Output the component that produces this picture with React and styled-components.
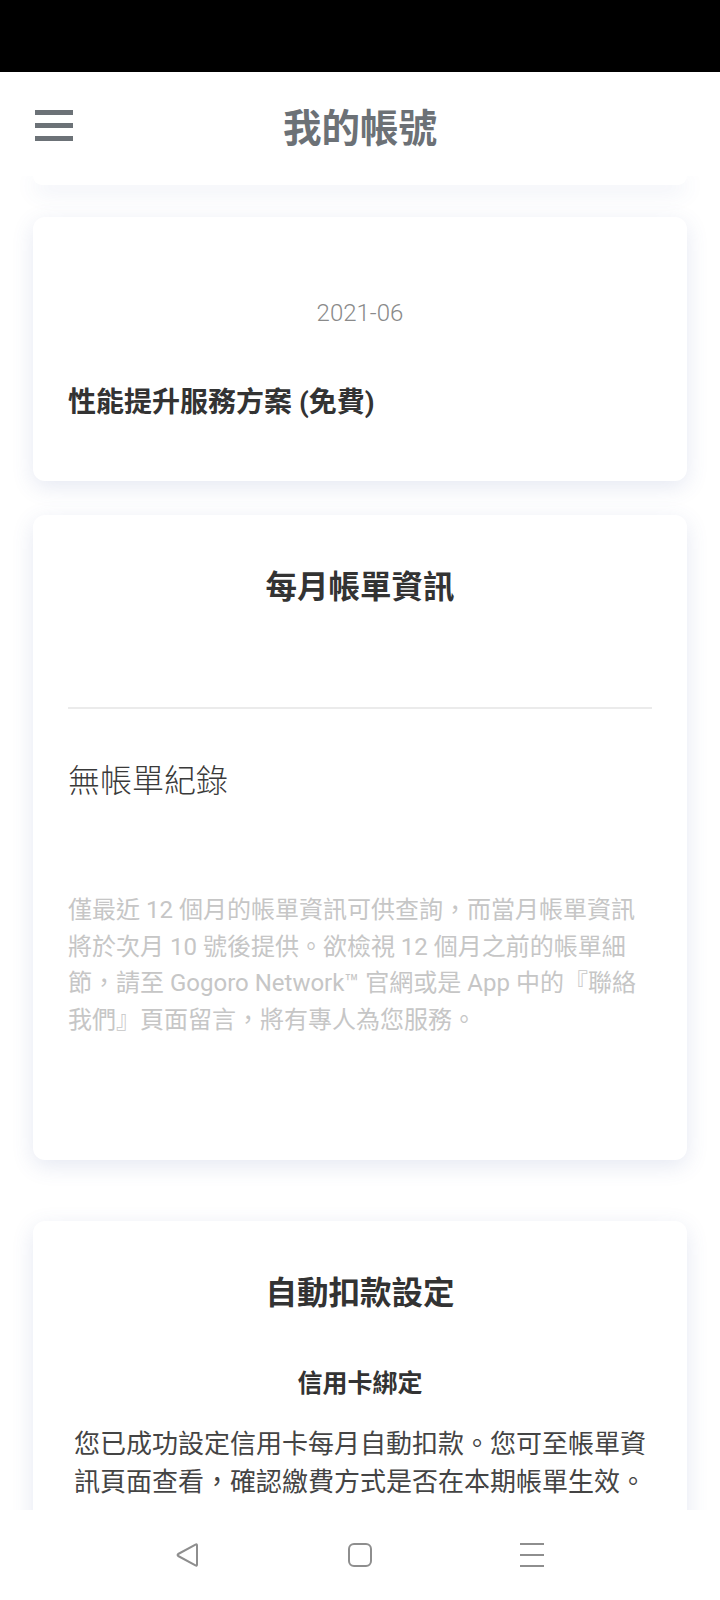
import React from "react";
import styled, { createGlobalStyle } from "styled-components";

const GlobalStyle = createGlobalStyle`
  body {
    margin: 0;
    background: #ffffff;
    font-family: Roboto, "Noto Sans CJK TC", sans-serif;
  }
`;

function App() {
  return (
    <>
      <GlobalStyle />
      <Screen>
        <StatusBar />
        <Header>
          <MenuButton aria-label="menu">
            <span />
            <span />
            <span />
          </MenuButton>
          <PageTitle>我的帳號</PageTitle>
          <div />
        </Header>

        <Scroll>
          <PeekCard />

          <Card $top={32} $height={264} $pt={82}>
            <DateText>2021-06</DateText>
            <PlanName>性能提升服務方案 (免費)</PlanName>
          </Card>

          <Card $top={34} $height={645} $pt={50}>
            <CardTitle>每月帳單資訊</CardTitle>
            <Divider />
            <EmptyText>無帳單紀錄</EmptyText>
            <Notice>
              僅最近 12 個月的帳單資訊可供查詢，而當月帳單資訊將於次月 10
              號後提供。欲檢視 12 個月之前的帳單細節，請至 Gogoro Network™
              官網或是 App 中的『聯絡我們』頁面留言，將有專人為您服務。
            </Notice>
          </Card>

          <Card $top={61} $pt={50} $pb={80}>
            <CardTitle>自動扣款設定</CardTitle>
            <SubTitle>信用卡綁定</SubTitle>
            <BodyText>
              您已成功設定信用卡每月自動扣款。您可至帳單資訊頁面查看，確認繳費方式是否在本期帳單生效。
            </BodyText>
          </Card>
        </Scroll>

        <NavBar>
          <NavIcon viewBox="0 0 24 24">
            <path
              d="M21 2.5 L21 21.5 Q21 23.2 19.5 22.4 L2.2 13 Q1 12 2.2 11 L19.5 1.6 Q21 0.8 21 2.5 Z"
              fill="none"
              stroke="#8e8e8e"
              strokeWidth="2"
              strokeLinejoin="round"
            />
          </NavIcon>
          <NavIcon viewBox="0 0 24 24">
            <rect
              x="1"
              y="1"
              width="22"
              height="22"
              rx="5"
              fill="none"
              stroke="#8e8e8e"
              strokeWidth="2"
            />
          </NavIcon>
          <NavIcon viewBox="0 0 24 24">
            <path
              d="M0 1 H24 M0 12 H24 M0 23 H24"
              stroke="#8e8e8e"
              strokeWidth="2"
            />
          </NavIcon>
        </NavBar>
      </Screen>
    </>
  );
}

const Screen = styled.div`
  width: 720px;
  height: 1600px;
  display: flex;
  flex-direction: column;
  overflow: hidden;
  background: #ffffff;
`;

const StatusBar = styled.div`
  height: 72px;
  flex-shrink: 0;
  background: #000000;
`;

const Header = styled.header`
  height: 104px;
  flex-shrink: 0;
  display: grid;
  grid-template-columns: 1fr auto 1fr;
  align-items: center;
  background: #ffffff;
  position: relative;
  z-index: 2;
`;

const MenuButton = styled.div`
  display: flex;
  flex-direction: column;
  gap: 8px;
  width: 38px;
  margin-left: 35px;
  margin-top: 2px;

  span {
    display: block;
    height: 5px;
    background: #6c7277;
  }
`;

const PageTitle = styled.h1`
  margin: 0;
  font-family: "Noto Sans CJK TC", sans-serif;
  font-size: 38.5px;
  font-weight: 700;
  line-height: 1;
  color: #6c7176;
  margin-top: 2px;
`;

const Scroll = styled.main`
  flex: 1;
  overflow: hidden;
  padding: 0 33px;
  position: relative;
  z-index: 1;
`;

const PeekCard = styled.div`
  height: 9px;
  background: #ffffff;
  border-radius: 0 0 12px 12px;
  box-shadow: 0 6px 22px rgba(70, 90, 160, 0.14);
`;

const Card = styled.section`
  margin-top: ${({ $top }) => $top}px;
  ${({ $height }) => ($height ? `height: ${$height}px;` : "")}
  box-sizing: border-box;
  padding: ${({ $pt }) => $pt}px 35px ${({ $pb = 0 }) => $pb}px;
  background: #ffffff;
  border-radius: 12px;
  box-shadow: 0 6px 22px rgba(70, 90, 160, 0.14);
`;

const DateText = styled.div`
  text-align: center;
  font-family: Roboto, sans-serif;
  font-weight: 300;
  font-size: 24px;
  line-height: 29px;
  color: #8a8a8a;
`;

const PlanName = styled.div`
  margin-top: 58px;
  font-size: 28px;
  font-weight: 700;
  line-height: 34px;
  color: #333333;
`;

const CardTitle = styled.h2`
  margin: 0;
  text-align: center;
  font-family: "Noto Sans CJK TC", sans-serif;
  font-size: 31.5px;
  font-weight: 700;
  line-height: 38px;
  color: #333333;
`;

const Divider = styled.hr`
  margin: 104px 0 0;
  border: none;
  height: 2px;
  background: #ebebeb;
`;

const EmptyText = styled.div`
  margin-top: 49px;
  font-family: "Noto Sans CJK TC", sans-serif;
  font-size: 32px;
  font-weight: 300;
  line-height: 40px;
  color: #3a3a3a;
`;

const Notice = styled.p`
  margin: 94px -5px 0 0;
  font-size: 24px;
  line-height: 36.5px;
  color: #c6c6c6;
`;

const SubTitle = styled.h3`
  margin: 56px 0 0;
  text-align: center;
  font-family: "Noto Sans CJK TC", sans-serif;
  font-size: 25px;
  font-weight: 700;
  line-height: 32px;
  color: #333333;
`;

const BodyText = styled.p`
  margin: 28px 0 0;
  text-align: center;
  font-size: 26px;
  line-height: 38px;
  color: #444444;
`;

const NavBar = styled.nav`
  height: 90px;
  flex-shrink: 0;
  display: flex;
  align-items: center;
  justify-content: center;
  gap: 148px;
  background: #ffffff;
  position: relative;
  z-index: 3;
`;

const NavIcon = styled.svg`
  width: 24px;
  height: 24px;
  overflow: visible;
`;

export default App;
